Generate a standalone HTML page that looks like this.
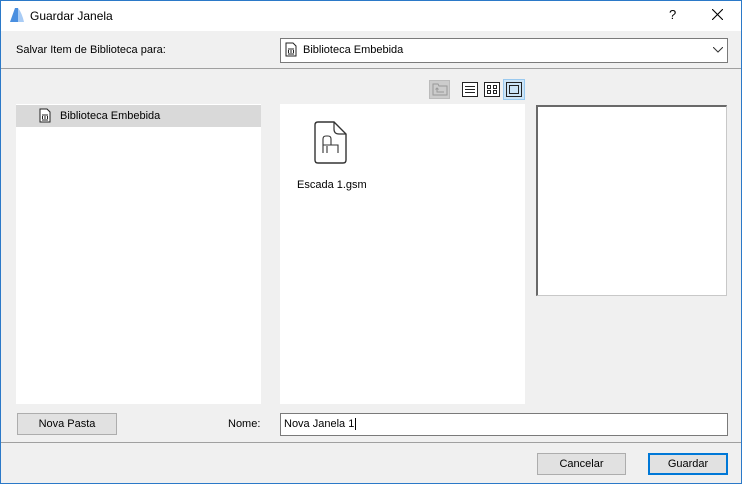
<!DOCTYPE html><html><head><style>
body{margin:0;width:742px;height:484px;overflow:hidden;font-family:"Liberation Sans",sans-serif;font-size:11px;color:#000;position:relative;background:#f0f0f0}
.a{position:absolute}
.btn{position:absolute;background:#e1e1e1;border:1px solid #adadad;text-align:center;box-sizing:border-box}
</style></head><body>
<div class="a" style="left:0;top:0;width:742px;height:31px;background:#fff"></div>
<svg class="a" style="left:9px;top:7px" width="16" height="16"><path d="M1 15 L6 1 L9 1 L9 15Z" fill="#4a8fe0"/><path d="M9 1 Q13 6 15 15 L9 15Z" fill="#a9ccf5"/></svg>
<div class="a" style="left:30px;top:9px;font-size:12px">Guardar Janela</div>
<div class="a" style="left:669px;top:7px;font-size:13px">?</div>
<svg class="a" style="left:712px;top:9px" width="11" height="11"><path d="M0 0L11 11M11 0L0 11" stroke="#000" stroke-width="1.1"/></svg>
<div class="a" style="left:16px;top:44px">Salvar Item de Biblioteca para:</div>
<div class="a" style="left:280px;top:38px;width:446px;height:23px;background:#fff;border:1px solid #7a7a7a"></div>
<svg class="a" style="left:285px;top:42px" width="12" height="15"><path d="M1 1H8L11 4V14H1Z" fill="#fff" stroke="#222"/><path d="M3 7H9M3.5 8V11M6 8V11M8.5 8V11M3 12H9" stroke="#222"/></svg>
<div class="a" style="left:303px;top:44px">Biblioteca Embebida</div>
<svg class="a" style="left:713px;top:47px" width="10" height="6"><path d="M0 0L5 5L10 0" fill="none" stroke="#333"/></svg>
<div class="a" style="left:0;top:68px;width:742px;height:1px;background:#a0a0a0"></div>
<div class="a" style="left:429px;top:80px;width:21px;height:19px;background:#ccc;border:1px solid #bbb;box-sizing:border-box"></div>
<svg class="a" style="left:432px;top:83px" width="16" height="13"><path d="M1 1H6L7 3H15V12H1Z" fill="none" stroke="#999"/><path d="M5 5V9H12M3.5 6.5L5 5L6.5 6.5" fill="none" stroke="#999"/></svg>
<svg class="a" style="left:462px;top:82px" width="16" height="15"><rect x=".5" y=".5" width="15" height="14" fill="#fff" stroke="#222"/><path d="M3 4.5H13M3 7.5H13M3 10.5H13" stroke="#222"/></svg>
<svg class="a" style="left:484px;top:82px" width="16" height="15"><rect x=".5" y=".5" width="15" height="14" fill="#fff" stroke="#222"/><rect x="3.5" y="3.5" width="3" height="3" fill="none" stroke="#222"/><rect x="9.5" y="3.5" width="3" height="3" fill="none" stroke="#222"/><rect x="3.5" y="8.5" width="3" height="3" fill="none" stroke="#222"/><rect x="9.5" y="8.5" width="3" height="3" fill="none" stroke="#222"/></svg>
<div class="a" style="left:503px;top:79px;width:22px;height:21px;background:#cce4f7;border:1px solid #99c9ef;box-sizing:border-box"></div>
<svg class="a" style="left:506px;top:82px" width="16" height="15"><rect x=".5" y=".5" width="15" height="14" fill="none" stroke="#222"/><rect x="3.5" y="3.5" width="9" height="8" fill="none" stroke="#222"/></svg>
<div class="a" style="left:16px;top:104px;width:245px;height:300px;background:#fff"></div>
<div class="a" style="left:16px;top:105px;width:245px;height:22px;background:#d9d9d9"></div>
<svg class="a" style="left:39px;top:108px" width="12" height="15"><path d="M1 1H8L11 4V14H1Z" fill="#fff" stroke="#222"/><path d="M3 7H9M3.5 8V11M6 8V11M8.5 8V11M3 12H9" stroke="#222"/></svg>
<div class="a" style="left:60px;top:110px">Biblioteca Embebida</div>
<div class="a" style="left:280px;top:104px;width:245px;height:300px;background:#fff"></div>
<svg class="a" style="left:314px;top:121px" width="34" height="44"><path d="M4 1H20L32 13V39Q32 42 29 42H4Q1 42 1 39V4Q1 1 4 1Z" fill="none" stroke="#333" stroke-width="1.4"/><path d="M20 1L20 8Q20 13 25 13H32" fill="none" stroke="#333" stroke-width="1.2"/><path d="M9 32V18Q9 15 12 15H14Q17 15 17 18V24H24V32M9 24H17M13 25V32M24 24L20 24" fill="none" stroke="#333" stroke-width="1.1"/></svg>
<div class="a" style="left:297px;top:179px">Escada 1.gsm</div>
<div class="a" style="left:536px;top:105px;width:191px;height:191px;background:#fff;border:1px solid #c8c8c8;border-left:2px solid #696969;border-top:2px solid #696969;box-sizing:border-box"></div>
<div class="btn" style="left:17px;top:413px;width:100px;height:22px;line-height:20px">Nova Pasta</div>
<div class="a" style="left:228px;top:418px">Nome:</div>
<div class="a" style="left:280px;top:413px;width:446px;height:21px;background:#fff;border:1px solid #7a7a7a"></div>
<div class="a" style="left:284px;top:418px">Nova Janela 1<span style="border-left:1px solid #000;margin-left:1px"></span></div>
<div class="a" style="left:0;top:442px;width:742px;height:1px;background:#a0a0a0"></div>
<div class="btn" style="left:537px;top:453px;width:89px;height:22px;line-height:20px">Cancelar</div>
<div class="btn" style="left:648px;top:453px;width:80px;height:22px;line-height:18px;border:2px solid #0078d7">Guardar</div>
<div class="a" style="left:0;top:0;width:740px;height:482px;border:1px solid #2b79c8"></div>
</body></html>
